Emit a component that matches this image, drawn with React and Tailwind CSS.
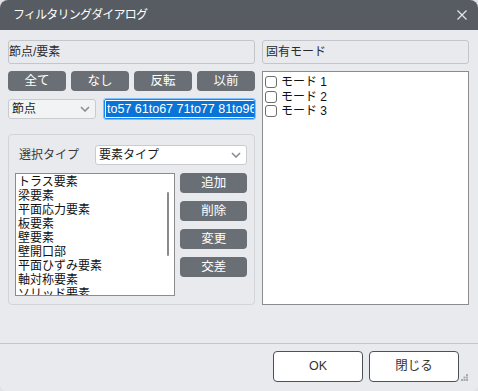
import React from "react";

const Chevron = () => (
  <svg width="10" height="6" viewBox="0 0 10 6" className="shrink-0">
    <path d="M1 1 L5 5 L9 1" fill="none" stroke="#8a8d92" strokeWidth="1.6" />
  </svg>
);

const GrayBtn = ({ children, className = "" }) => (
  <div className={"h-[20px] rounded-[4px] bg-[#6a6f76] text-white text-[12.5px] leading-[20px] flex items-center justify-center " + className}>
    {children}
  </div>
);

export default function App() {
  const items = ["トラス要素", "梁要素", "平面応力要素", "板要素", "壁要素", "壁開口部", "平面ひずみ要素", "軸対称要素", "ソリッド要素"];
  return (
    <div className="w-[478px] h-[391px] bg-[#e1e2e6]">
      <div className="w-[478px] h-[391px] bg-[#e9eaee] rounded-t-[8px] rounded-b-[6px] overflow-hidden flex flex-col font-['Liberation_Sans','Noto_Sans_CJK_JP',sans-serif] text-[#1b1b1b]">
        {/* title bar */}
        <div className="h-[30px] shrink-0 bg-[#575c63] flex items-center justify-between pl-[13px] pr-[11px]">
          <span className="text-white text-[12px] leading-none tracking-[-0.8px]">フィルタリングダイアログ</span>
          <svg width="10" height="10" viewBox="0 0 10 10">
            <path d="M0.5 0.5 L9.5 9.5 M9.5 0.5 L0.5 9.5" stroke="#e6e7ea" strokeWidth="1.2" />
          </svg>
        </div>

        {/* body */}
        <div className="flex-1 flex pl-[8px] pt-[10px] gap-[7px]">
          {/* left column */}
          <div className="w-[247px] flex flex-col">
            <div className="h-[24px] border border-[#c3c6cb] rounded-[3px] flex items-center text-[12px] text-[#2a2a2a] leading-none">
              節点/要素
            </div>
            <div className="mt-[7px] grid grid-cols-4 gap-[5px]">
              <GrayBtn>全て</GrayBtn>
              <GrayBtn>なし</GrayBtn>
              <GrayBtn>反転</GrayBtn>
              <GrayBtn>以前</GrayBtn>
            </div>
            <div className="mt-[8px] flex gap-[8px] h-[20px]">
              <div className="w-[88px] h-[20px] bg-[#f2f3f5] border border-[#c9cbcf] rounded-[3px] flex items-center justify-between pl-[3px] pr-[5px] text-[12px] leading-none">
                <span>節点</span>
                <Chevron />
              </div>
              <div className="flex-1 h-[20px] border border-[#1a86f0] outline outline-1 outline-[#7cc0ff] rounded-[2px] bg-white overflow-hidden flex items-center pl-[1px]">
                <span className="whitespace-nowrap bg-[#0a74d6] text-white text-[12.5px] leading-[16px] px-[1px]">
                  to57 61to67 71to77 81to96
                </span>
              </div>
            </div>

            {/* group box */}
            <div className="mt-[15px] h-[171px] border border-[#d2d4d8] rounded-[4px] flex flex-col pt-[10px] pl-[6px] pr-[7px]">
              <div className="flex items-center h-[20px]">
                <span className="w-[80px] pl-[4px] text-[12px] text-[#3a3a3a] leading-none">選択タイプ</span>
                <div className="flex-1 h-[20px] bg-white border border-[#c9cbcf] rounded-[3px] flex items-center justify-between pl-[3px] pr-[5px] text-[12px] leading-none">
                  <span>要素タイプ</span>
                  <Chevron />
                </div>
              </div>
              <div className="mt-[8px] flex gap-[5px]">
                <div className="w-[161px] h-[123px] border border-[#8c8c8c] bg-white overflow-hidden flex">
                  <div className="flex-1 pl-[2px] pt-[1px] text-[12px] leading-[14px] text-[#111]">
                    {items.map((t) => (
                      <div key={t} className="whitespace-nowrap">{t}</div>
                    ))}
                  </div>
                  <div className="w-[12px] flex justify-center pt-[18px]">
                    <div className="w-[2px] h-[64px] bg-[#8a8a8a] rounded-full" />
                  </div>
                </div>
                <div className="w-[67px] flex flex-col gap-[8px]">
                  <GrayBtn>追加</GrayBtn>
                  <GrayBtn>削除</GrayBtn>
                  <GrayBtn>変更</GrayBtn>
                  <GrayBtn>交差</GrayBtn>
                </div>
              </div>
            </div>
          </div>

          {/* right column */}
          <div className="w-[207px] flex flex-col">
            <div className="h-[24px] border border-[#c3c6cb] rounded-[3px] flex items-center pl-[3px] text-[12px] text-[#2a2a2a] leading-none">
              固有モード
            </div>
            <div className="mt-[7px] h-[234px] border border-[#8c8c8c] bg-white pl-[2px] pt-[4px] flex flex-col gap-[2px]">
              {["モード 1", "モード 2", "モード 3"].map((t) => (
                <div key={t} className="flex items-center h-[12.5px] gap-[4px]">
                  <div className="w-[12px] h-[12px] border border-[#6e6e6e] rounded-[3px] bg-white" />
                  <span className="text-[12px] leading-none text-[#111]">{t}</span>
                </div>
              ))}
            </div>
          </div>
        </div>

        {/* footer */}
        <div className="relative h-[48px] shrink-0 border-t border-[#c4c6ca] flex justify-end items-start pt-[7px] pr-[19px] gap-[6px]">
          <div className="w-[90px] h-[31px] bg-white border border-[#4c5157] rounded-[4px] flex items-center justify-center text-[12.5px] text-[#333]">OK</div>
          <div className="w-[90px] h-[31px] bg-white border border-[#4c5157] rounded-[4px] flex items-center justify-center text-[12.5px] text-[#333]">閉じる</div>
          <svg className="absolute right-[10px] bottom-[10px]" width="7" height="7" viewBox="0 0 7 7">
            <rect x="5" y="0" width="2" height="2" fill="#a9abb0" />
            <rect x="2.5" y="2.5" width="2" height="2" fill="#a9abb0" />
            <rect x="5" y="2.5" width="2" height="2" fill="#a9abb0" />
            <rect x="0" y="5" width="2" height="2" fill="#a9abb0" />
            <rect x="2.5" y="5" width="2" height="2" fill="#a9abb0" />
            <rect x="5" y="5" width="2" height="2" fill="#a9abb0" />
          </svg>
        </div>
      </div>
    </div>
  );
}
